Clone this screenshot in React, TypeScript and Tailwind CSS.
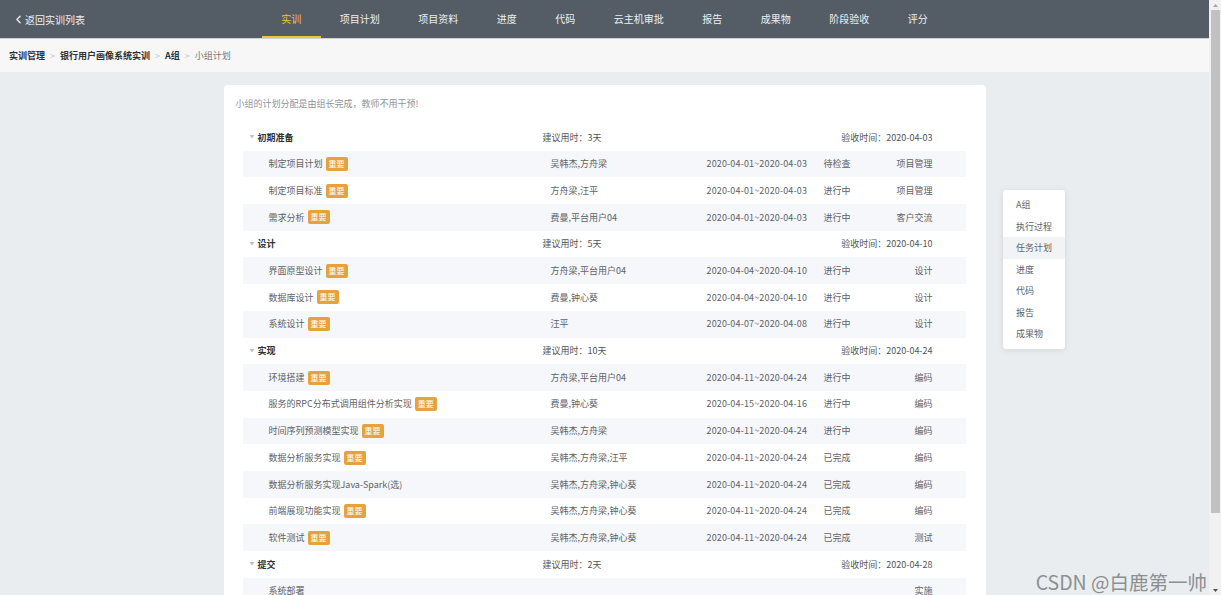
import { ChevronLeft } from 'lucide-react'

type Task = {
  name: string
  important?: boolean
  members?: string
  range?: string
  status?: string
  category: string
}

type Group = {
  title: string
  days: string
  deadline: string
  tasks: Task[]
}

const navItems = ['实训', '项目计划', '项目资料', '进度', '代码', '云主机审批', '报告', '成果物', '阶段验收', '评分']

const sideItems = ['A组', '执行过程', '任务计划', '进度', '代码', '报告', '成果物']

const groups: Group[] = [
  {
    title: '初期准备',
    days: '3天',
    deadline: '2020-04-03',
    tasks: [
      { name: '制定项目计划', important: true, members: '吴韩杰,方舟梁', range: '2020-04-01~2020-04-03', status: '待检查', category: '项目管理' },
      { name: '制定项目标准', important: true, members: '方舟梁,汪平', range: '2020-04-01~2020-04-03', status: '进行中', category: '项目管理' },
      { name: '需求分析', important: true, members: '费曼,平台用户04', range: '2020-04-01~2020-04-03', status: '进行中', category: '客户交流' },
    ],
  },
  {
    title: '设计',
    days: '5天',
    deadline: '2020-04-10',
    tasks: [
      { name: '界面原型设计', important: true, members: '方舟梁,平台用户04', range: '2020-04-04~2020-04-10', status: '进行中', category: '设计' },
      { name: '数据库设计', important: true, members: '费曼,钟心葵', range: '2020-04-04~2020-04-10', status: '进行中', category: '设计' },
      { name: '系统设计', important: true, members: '汪平', range: '2020-04-07~2020-04-08', status: '进行中', category: '设计' },
    ],
  },
  {
    title: '实现',
    days: '10天',
    deadline: '2020-04-24',
    tasks: [
      { name: '环境搭建', important: true, members: '方舟梁,平台用户04', range: '2020-04-11~2020-04-24', status: '进行中', category: '编码' },
      { name: '服务的RPC分布式调用组件分析实现', important: true, members: '费曼,钟心葵', range: '2020-04-15~2020-04-16', status: '进行中', category: '编码' },
      { name: '时间序列预测模型实现', important: true, members: '吴韩杰,方舟梁', range: '2020-04-11~2020-04-24', status: '进行中', category: '编码' },
      { name: '数据分析服务实现', important: true, members: '吴韩杰,方舟梁,汪平', range: '2020-04-11~2020-04-24', status: '已完成', category: '编码' },
      { name: '数据分析服务实现Java-Spark(选)', members: '吴韩杰,方舟梁,钟心葵', range: '2020-04-11~2020-04-24', status: '已完成', category: '编码' },
      { name: '前端展现功能实现', important: true, members: '吴韩杰,方舟梁,钟心葵', range: '2020-04-11~2020-04-24', status: '已完成', category: '编码' },
      { name: '软件测试', important: true, members: '吴韩杰,方舟梁,钟心葵', range: '2020-04-11~2020-04-24', status: '已完成', category: '测试' },
    ],
  },
  {
    title: '提交',
    days: '2天',
    deadline: '2020-04-28',
    tasks: [{ name: '系统部署', category: '实施' }],
  },
]

function Caret() {
  return (
    <svg width="6" height="4" viewBox="0 0 6 4" className="mr-[3px] ml-[6px] shrink-0">
      <path d="M0.5 0 L5.5 0 L3 3.5 Z" fill="#c0c4cc" />
    </svg>
  )
}

function GroupRow({ group }: { group: Group }) {
  return (
    <div className="flex h-[26.7px] items-center bg-white pr-[33px]">
      <Caret />
      <span className="w-[285px] font-semibold text-[#303133]">{group.title}</span>
      <span className="flex-1 text-[#555]">建议用时：{group.days}</span>
      <span className="text-[#555]">验收时间：{group.deadline}</span>
    </div>
  )
}

function TaskRow({ task, shaded }: { task: Task; shaded: boolean }) {
  return (
    <div className={`flex h-[26.7px] items-center pr-[33px] pl-[26px] text-[#606266] ${shaded ? 'bg-[#f5f7fa]' : 'bg-white'}`}>
      <div className="flex w-[282px] items-center gap-[3px]">
        <span>{task.name}</span>
        {task.important && (
          <span className="flex h-[14px] items-center rounded-[2px] bg-[#e6a23c] px-[3px] text-[8px] leading-none text-white">
            重要
          </span>
        )}
      </div>
      <span className="w-[156px]">{task.members}</span>
      <span className="w-[117px] tracking-[0.15px]">{task.range}</span>
      <span className="flex-1">{task.status}</span>
      <span>{task.category}</span>
    </div>
  )
}

export default function App() {
  return (
    <div className="flex h-[595px] w-[1221px] overflow-hidden font-['Noto_Sans_CJK_SC','Noto_Sans',sans-serif]">
      <div className="relative flex w-[1209px] flex-col bg-[#e9edf0]">
        <header className="grid h-[39px] shrink-0 grid-cols-[1fr_auto_1fr] border-b border-[#cfd3d7] bg-[#545c66]">
          <div className="flex items-center pl-[12px] text-[10px] text-[#eef0f2]">
            <ChevronLeft className="h-[13px] w-[13px]" strokeWidth={2.4} />
            <span>返回实训列表</span>
          </div>
          <nav className="flex h-[38px]">
            {navItems.map((item, i) => (
              <div
                key={item}
                className={`flex items-center border-b-2 px-[19.25px] text-[10px] ${
                  i === 0 ? 'border-[#f2c233] text-[#f2c233]' : 'border-transparent text-[#eef0f2]'
                }`}
              >
                {item}
              </div>
            ))}
          </nav>
          <div />
        </header>

        <div className="flex h-[33px] shrink-0 items-center gap-[5px] bg-[#f7f7f7] pl-[9px] text-[9px]">
          <span className="font-semibold text-[#303133]">实训管理</span>
          <span className="text-[#c0c4cc]">&gt;</span>
          <span className="font-semibold text-[#303133]">银行用户画像系统实训</span>
          <span className="text-[#c0c4cc]">&gt;</span>
          <span className="font-semibold text-[#303133]">A组</span>
          <span className="text-[#c0c4cc]">&gt;</span>
          <span className="text-[#777]">小组计划</span>
        </div>

        <main className="flex justify-center pt-[13px]">
          <div className="w-[762px] rounded-[4px] bg-white pt-[10px] pb-[20px] text-[9px]">
            <p className="flex h-[18px] items-center pl-[12px] text-[#909399]">小组的计划分配是由组长完成，教师不用干预!</p>
            <div className="mt-[11px] px-[19px] pr-[20px]">
              {groups.map((g) => (
                <div key={g.title}>
                  <GroupRow group={g} />
                  {g.tasks.map((t, i) => (
                    <TaskRow key={t.name} task={t} shaded={i % 2 === 0} />
                  ))}
                </div>
              ))}
            </div>
          </div>
        </main>

        <ul className="absolute top-[190px] right-[144px] w-[62px] rounded-[3px] bg-white py-[4px] text-[9px] text-[#606266] shadow-[0_1px_6px_rgba(0,0,0,0.1)]">
          {sideItems.map((s) => (
            <li key={s} className={`flex h-[21.5px] items-center pl-[13px] ${s === '任务计划' ? 'bg-[#f2f3f5]' : ''}`}>
              {s}
            </li>
          ))}
        </ul>

        <div className="absolute right-[2px] bottom-[4px] text-[19.5px] leading-none text-[#8d8f92]">CSDN @白鹿第一帅</div>
      </div>

      <div className="flex w-[12px] flex-col bg-[#f1f1f1]">
        <div className="flex h-[10px] items-center justify-center">
          <svg width="5" height="3" viewBox="0 0 5 3">
            <path d="M2.5 0 L5 3 L0 3 Z" fill="#a3a3a3" />
          </svg>
        </div>
        <div className="mx-auto h-[503px] w-[9px] bg-[#c1c1c1]" />
        <div className="flex-1" />
        <div className="flex h-[10px] items-center justify-center">
          <svg width="5" height="3" viewBox="0 0 5 3">
            <path d="M0 0 L5 0 L2.5 3 Z" fill="#505050" />
          </svg>
        </div>
      </div>
    </div>
  )
}
